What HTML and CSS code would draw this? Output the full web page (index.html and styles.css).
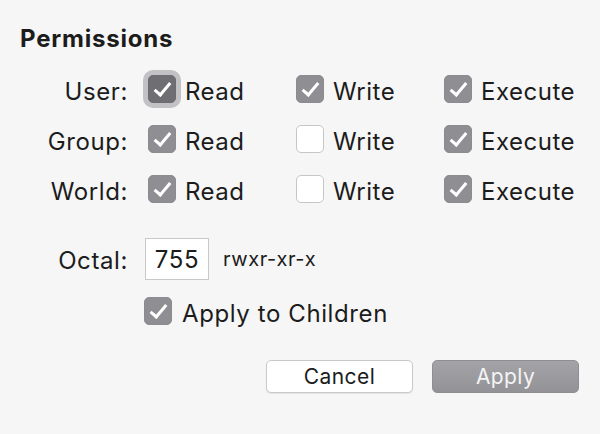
FILE: index.html
```html
<!DOCTYPE html>
<html>
	<head>
		<meta charset="utf-8">
		<title>Permissions</title>
		<link rel="stylesheet" href="styles.css">
	</head>
	<body>
		<div class="panel">
			<h1 class="title">Permissions</h1>

			<div class="row">
				<span class="label">User:</span>
				<span class="item"><span class="box on focus"></span>Read</span>
				<span class="item"><span class="box on"></span>Write</span>
				<span class="item"><span class="box on"></span>Execute</span>
			</div>
			<div class="row">
				<span class="label">Group:</span>
				<span class="item"><span class="box on"></span>Read</span>
				<span class="item"><span class="box"></span>Write</span>
				<span class="item"><span class="box on"></span>Execute</span>
			</div>
			<div class="row">
				<span class="label">World:</span>
				<span class="item"><span class="box on"></span>Read</span>
				<span class="item"><span class="box"></span>Write</span>
				<span class="item"><span class="box on"></span>Execute</span>
			</div>

			<div class="octal">
				<span class="label">Octal:</span>
				<span class="field">755</span>
				<span class="mode">rwxr-xr-x</span>
			</div>

			<div class="children">
				<span class="item"><span class="box on"></span>Apply to Children</span>
			</div>

			<div class="buttons">
				<span class="btn cancel">Cancel</span>
				<span class="btn apply">Apply</span>
			</div>
		</div>
	</body>
</html>
```

FILE: styles.css
```css
body{
	margin: 0;
	background-color: #f6f6f6;
	font-family: Inter, "Liberation Sans", sans-serif;
	color: #1c1c1c;
}
.panel{
	width: 600px;
	height: 434px;
}
.title{
	margin: 0;
	padding: 25px 0 0 20px;
	font-size: 24px;
	line-height: 28px;
	font-weight: 700;
	letter-spacing: 0.8px;
}

/* 三行复选框 */
.row{
	display: flex;
	align-items: center;
	height: 50px;
}
.title + .row{
	margin-top: 11px;
}
.label{
	flex: none;
	width: 128px;
	padding: 4px 2px 0 0;
	text-align: right;
	font-size: 24px;
	letter-spacing: 0.6px;
}
.row .label{
	margin-right: 18px;
}
.item{
	display: flex;
	align-items: center;
	gap: 9px;
	width: 148px;
	padding-top: 4px;
	font-size: 24px;
	letter-spacing: 0.5px;
}

/* 复选框 勾用伪元素画 */
.box{
	position: relative;
	flex: none;
	box-sizing: border-box;
	width: 28px;
	height: 28px;
	margin-bottom: 4px;
	border: 1px solid #c6c6c6;
	border-radius: 5px;
	background-color: #fff;
}
.box.on{
	border-color: #8b8b90;
	background-color: #8e8e93;
}
.box.on::after{
	content: '';
	position: absolute;
	left: 9px;
	top: 3px;
	width: 6px;
	height: 14px;
	border-right: 3px solid #fff;
	border-bottom: 3px solid #fff;
	transform: rotate(40deg);
}
.box.focus{
	border-color: #6c6c71;
	background-color: #6e6e73;
	box-shadow: 0 0 0 5px #c2c2c4;
}

/* 八进制 */
.octal{
	display: flex;
	align-items: center;
	height: 50px;
	margin-top: 20px;
}
.octal .label{
	padding-top: 2px;
}
.field{
	box-sizing: border-box;
	width: 64px;
	height: 42px;
	margin-left: 15px;
	border: 1px solid #c8c8c8;
	background-color: #fff;
	font-size: 24px;
	line-height: 42px;
	letter-spacing: 0.6px;
	text-align: center;
}
.mode{
	margin-left: 14px;
	font-size: 20px;
	letter-spacing: 0.6px;
}

.children{
	display: flex;
	align-items: center;
	height: 40px;
	margin-top: 7px;
	padding-left: 144px;
}
.children .item{
	width: auto;
	gap: 10px;
	letter-spacing: 0.6px;
}

/* 按钮 */
.buttons{
	display: flex;
	justify-content: flex-end;
	gap: 19px;
	margin-top: 29px;
	padding-right: 21px;
}
.btn{
	box-sizing: border-box;
	width: 147px;
	height: 33px;
	border-radius: 5px;
	font-size: 21px;
	line-height: 32px;
	letter-spacing: 0.4px;
	text-align: center;
}
.cancel{
	border: 1px solid #c9c9c9;
	background-color: #fff;
	box-shadow: 0 1px 1px rgba(0,0,0,0.08);
}
.apply{
	border: 1px solid #8f8f93;
	background: linear-gradient(#a4a4a8, #929297);
	color: #f4f4f4;
}
```
